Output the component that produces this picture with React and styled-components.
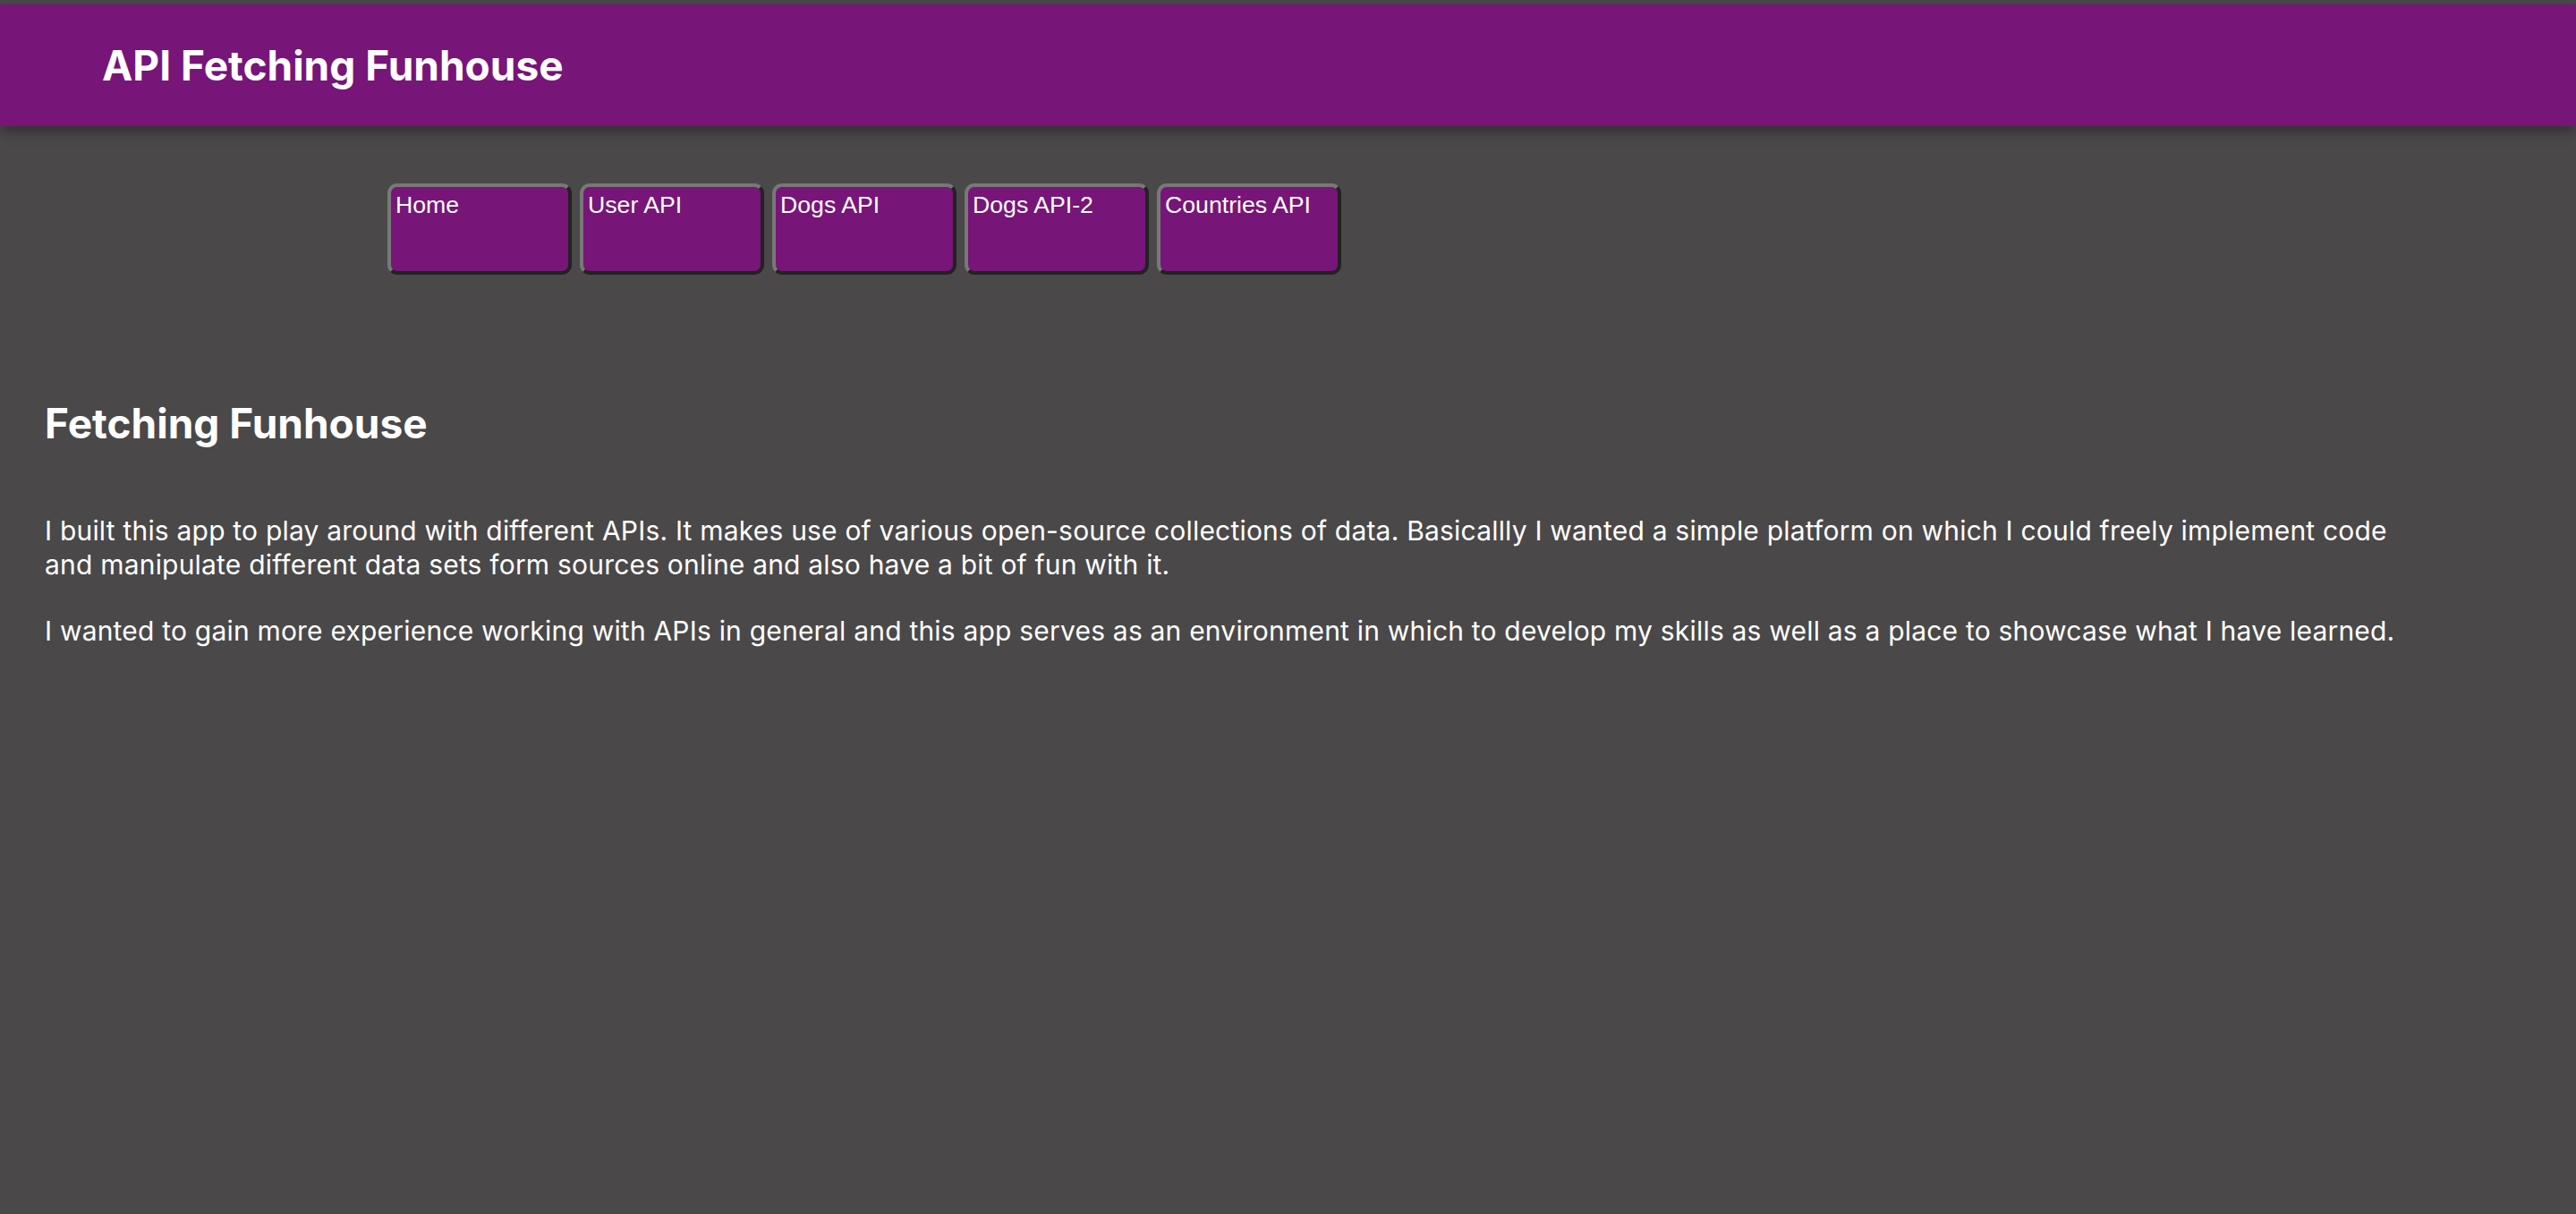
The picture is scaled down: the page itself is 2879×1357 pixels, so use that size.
import React from 'react';
import styled, { createGlobalStyle } from 'styled-components';

const GlobalStyle = createGlobalStyle`
  body {
    margin: 0;
    background: #4a4849;
    font-family: Inter, "Noto Sans", sans-serif;
    color: #fff;
  }
`;

const Page = styled.div`
  min-height: 100vh;
  padding-top: 5px;
  box-sizing: border-box;
  background: #4a4849;
`;

const Header = styled.header`
  height: 136px;
  display: flex;
  align-items: center;
  padding-left: 114px;
  background: #771578;
  box-shadow: 0 6px 14px rgba(0, 0, 0, 0.35);
`;

const Title = styled.h1`
  margin: 0;
  font-size: 46px;
  font-weight: 700;
  color: #fff;
`;

const Nav = styled.nav`
  display: flex;
  gap: 9px;
  padding: 64px 0 0 433px;
`;

const NavButton = styled.button`
  box-sizing: border-box;
  width: 206px;
  height: 102px;
  padding: 5px 5px;
  display: flex;
  align-items: flex-start;
  justify-content: flex-start;
  background: #771578;
  color: #fff;
  font-family: "Liberation Sans", Arial, sans-serif;
  font-size: 26.67px;
  text-align: left;
  border: 4px solid;
  border-color: #787878 #222 #222 #787878;
  border-radius: 11px;
  cursor: pointer;
`;

const Main = styled.main`
  padding: 0 50px;
  max-width: 2640px;
`;

const Heading = styled.h2`
  margin: 137px 0 72px;
  font-size: 46px;
  line-height: 58px;
  font-weight: 700;
`;

const Paragraph = styled.p`
  margin: 0 0 36px;
  font-size: 30px;
  line-height: 38px;
  letter-spacing: 0.2px;
  font-weight: 400;
`;

const links = ['Home', 'User API', 'Dogs API', 'Dogs API-2', 'Countries API'];

export default function App() {
  return (
    <Page>
      <GlobalStyle />
      <Header>
        <Title>API Fetching Funhouse</Title>
      </Header>
      <Nav>
        {links.map((l) => (
          <NavButton key={l}>{l}</NavButton>
        ))}
      </Nav>
      <Main>
        <Heading>Fetching Funhouse</Heading>
        <Paragraph>
          I built this app to play around with different APIs. It makes use of various open-source collections of data. Basicallly I wanted a simple platform on which I could freely implement code and manipulate different data sets form sources online and also have a bit of fun with it.
        </Paragraph>
        <Paragraph>
          I wanted to gain more experience working with APIs in general and this app serves as an environment in which to develop my skills as well as a place to showcase what I have learned.
        </Paragraph>
      </Main>
    </Page>
  );
}
